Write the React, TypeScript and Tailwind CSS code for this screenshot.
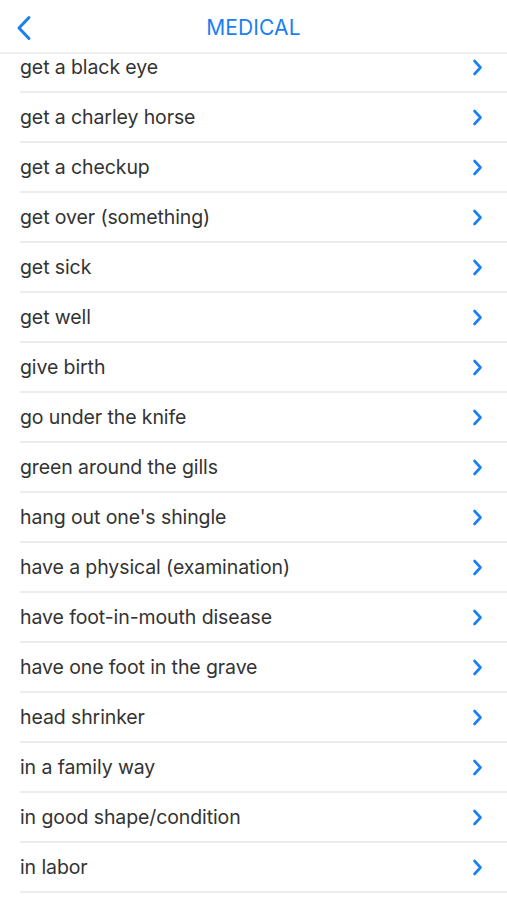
import React from "react";

const items = [
  "get a black eye",
  "get a charley horse",
  "get a checkup",
  "get over (something)",
  "get sick",
  "get well",
  "give birth",
  "go under the knife",
  "green around the gills",
  "hang out one's shingle",
  "have a physical (examination)",
  "have foot-in-mouth disease",
  "have one foot in the grave",
  "head shrinker",
  "in a family way",
  "in good shape/condition",
  "in labor",
];

function Chevron() {
  return (
    <svg width="11" height="17" viewBox="0 0 11 17" fill="none">
      <path d="M2.5 2 L8.5 8.5 L2.5 15" stroke="#1a7ff3" strokeWidth="2.6" strokeLinecap="round" strokeLinejoin="round" />
    </svg>
  );
}

export default function App() {
  return (
    <div className="w-[507px] h-[900px] overflow-hidden bg-white" style={{ fontFamily: "Inter, 'Noto Sans', sans-serif" }}>
      <div className="relative h-[54px] flex items-center justify-center border-b-2 border-[#efefef] bg-white z-10">
        <svg className="absolute left-[15px] top-[15px]" width="18" height="26" viewBox="0 0 18 26" fill="none">
          <path d="M14 2.5 L4 13 L14 23.5" stroke="#1a7ff3" strokeWidth="3" strokeLinecap="round" strokeLinejoin="round" />
        </svg>
        <span className="text-[21px] text-[#1a7ff3] tracking-[0.1px] mt-[3px]">MEDICAL</span>
      </div>
      <div className="-mt-[11px]">
        {items.map((t) => (
          <div key={t} className="ml-5 h-[50px] flex items-center justify-between border-b-2 border-[#ededed] pr-[24px]">
            <span className="text-[19.5px] text-[#333333] tracking-[-0.1px] mt-[1px]">{t}</span>
            <Chevron />
          </div>
        ))}
      </div>
    </div>
  );
}
